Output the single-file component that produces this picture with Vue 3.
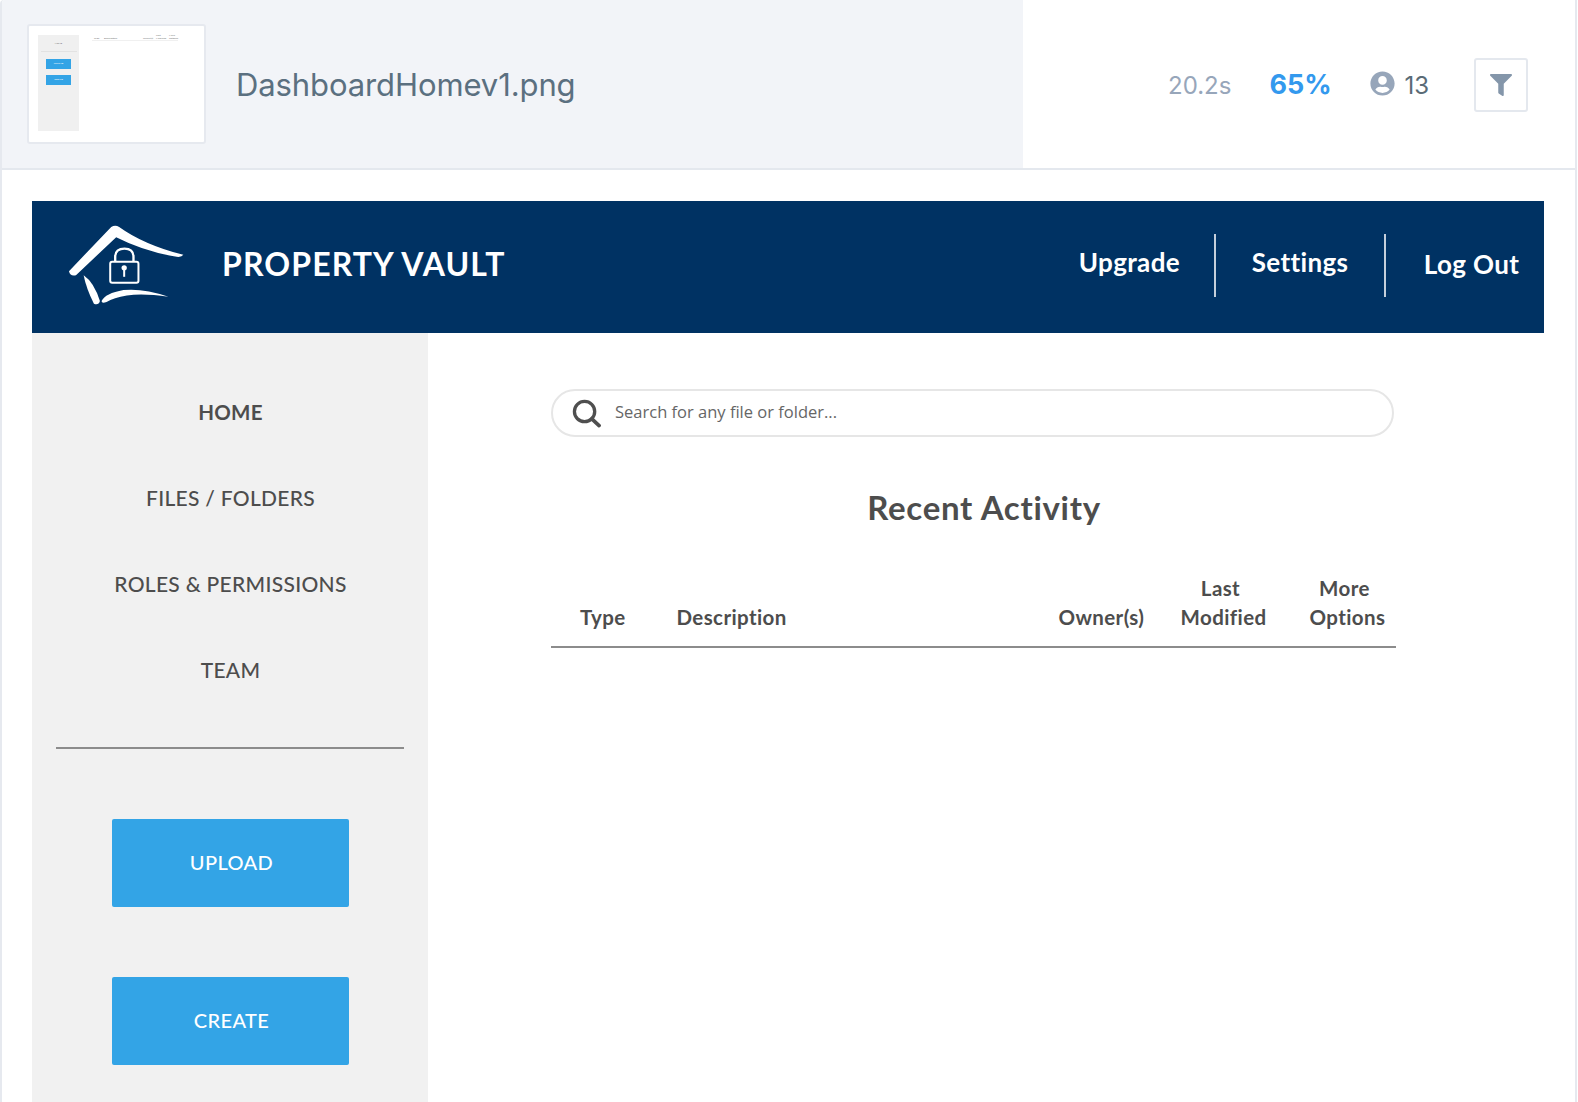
<script setup>
const navItems = [
  { label: 'HOME', active: true },
  { label: 'FILES / FOLDERS' },
  { label: 'ROLES & PERMISSIONS' },
  { label: 'TEAM' }
]
</script>

<template>
  <div class="frame">
    <header class="result">
      <div class="result-main">
        <div class="thumb">
          <div class="t-side">
            <span class="t-label">HOME</span>
            <i class="t-rule"></i>
            <span class="t-btn">UPLOAD</span>
            <span class="t-btn">CREATE</span>
          </div>
          <div class="t-table">
            <span>Type</span>
            <span>Description</span>
            <span>Owner(s)</span>
            <span>Last<br />Modified</span>
            <span>More<br />Options</span>
          </div>
        </div>
        <div class="filename">DashboardHomev1.png</div>
      </div>
      <div class="result-stats">
        <span class="time">20.2s</span>
        <span class="pct">65%</span>
        <span class="users">
          <svg class="user-icon" viewBox="0 0 496 512"><path fill="#97a6ba" d="M248 8C111 8 0 119 0 256s111 248 248 248 248-111 248-248S385 8 248 8zm0 96c48.6 0 88 39.4 88 88s-39.4 88-88 88-88-39.4-88-88 39.4-88 88-88zm0 344c-58.7 0-111.3-26.6-146.5-68.2 18.8-35.4 55.6-59.8 98.5-59.8 2.4 0 4.8.4 7.1 1.1 13 4.2 26.6 6.9 40.9 6.9 14.3 0 28-2.7 40.9-6.9 2.3-.7 4.7-1.1 7.1-1.1 42.9 0 79.7 24.4 98.5 59.8C359.3 421.4 306.7 448 248 448z"/></svg>
          13
        </span>
        <button class="filter">
          <svg viewBox="0 0 512 512"><path fill="#8496aa" d="M487.976 0H24.028C2.71 0-8.047 25.866 7.058 40.971L192 225.941V432c0 7.831 3.821 15.17 10.237 19.662l80 55.98C298.02 518.69 320 507.493 320 487.98V225.941l184.947-184.97C520.021 25.896 509.338 0 487.976 0z"/></svg>
        </button>
      </div>
    </header>

    <section class="shot">
      <div class="topbar">
        <svg class="logo" viewBox="110 90 355 245">
          <path fill="#fff" d="M116 228 L243 95 Q255 88 267 95 Q340 148 460 179 Q455 187 440 185 Q340 168 258 126 L137 240 Q120 245 116 228Z"/>
          <path fill="#fff" d="M160 240 Q192 262 209 318 Q205 332 191 326 Q168 280 160 240Z"/>
          <path fill="#fff" d="M214 318 Q225 295 280 285 Q340 279 415 305 Q340 294 290 301 Q250 308 229 321 Q214 327 214 318Z"/>
          <rect x="240" y="200" width="85" height="63" rx="6" fill="none" stroke="#fff" stroke-width="6"/>
          <path fill="none" stroke="#fff" stroke-width="7" d="M255 198 V185 Q255 160 283 160 Q310 160 310 185 V198"/>
          <circle cx="282" cy="218" r="8" fill="#fff"/>
          <rect x="279" y="218" width="6" height="27" fill="#fff"/>
        </svg>
        <div class="brand">PROPERTY VAULT</div>
        <nav class="topnav">
          <a class="tn-upgrade">Upgrade</a>
          <a class="tn-settings">Settings</a>
          <a class="tn-logout">Log Out</a>
        </nav>
      </div>

      <div class="body">
        <aside class="sidebar">
          <ul class="menu">
            <li v-for="item in navItems" :key="item.label" :class="{ active: item.active }">{{ item.label }}</li>
          </ul>
          <hr class="rule" />
          <button class="cta">UPLOAD</button>
          <button class="cta">CREATE</button>
        </aside>

        <main class="content">
          <div class="search">
            <svg class="search-icon" viewBox="0 0 30 30">
              <circle cx="13" cy="13" r="10.5" fill="none" stroke="#4f4f4f" stroke-width="3.4"/>
              <path d="M20.5 20.5 L28 27.5" fill="none" stroke="#4f4f4f" stroke-width="3.8" stroke-linecap="round"/>
            </svg>
            <span class="search-text">Search for any file or folder...</span>
          </div>
          <h1 class="title">Recent Activity</h1>
          <div class="thead">
            <div>Type</div>
            <div>Description</div>
            <div>Owner(s)</div>
            <div class="c-last">Last<br />Modified</div>
            <div class="c-more">More<br />Options</div>
          </div>
        </main>
      </div>
    </section>
  </div>
</template>

<style>
html, body { margin: 0; background: #fff; }
</style>

<style scoped>
.frame {
  box-sizing: border-box;
  width: 1577px;
  height: 1102px;
  overflow: hidden;
  border-left: 2px solid #e6e9ef;
  border-right: 2px solid #e6e9ef;
  border-top-left-radius: 4px;
  font-family: Inter, "Liberation Sans", sans-serif;
  background: #fff;
}
.result {
  display: flex;
  height: 168px;
  border-bottom: 2px solid #e4e8ee;
}
.result-main {
  width: 1021px;
  display: flex;
  align-items: center;
  background: #f2f4f8;
  padding-left: 25px;
  box-sizing: border-box;
}
.thumb {
  box-sizing: border-box;
  flex: none;
  width: 179px;
  height: 120px;
  background: #fff;
  border: 2px solid #e6e9ef;
  border-radius: 3px;
  display: flex;
  align-items: flex-start;
  padding: 9px 0 0 9px;
}
.t-side {
  width: 41px;
  height: 96px;
  background: #f0f0f0;
  display: flex;
  flex-direction: column;
  align-items: center;
  font-family: Lato, sans-serif;
}
.t-label { font-size: 2.4px; color: #666; margin-top: 7px; line-height: 3px; }
.t-rule { display: block; width: 36px; height: 1px; background: #e2e2e2; margin-top: 6px; }
.t-btn {
  display: block;
  width: 25px;
  height: 10px;
  line-height: 10px;
  text-align: center;
  font-size: 2.4px;
  color: #fff;
  background: #33a4e6;
  margin-top: 6px;
}
.t-rule + .t-btn { margin-top: 7px; }
.t-table {
  box-sizing: border-box;
  width: 86px;
  height: 7px;
  margin: -1px 0 0 13px;
  padding-left: 2px;
  border-bottom: 1px solid #f0f0f0;
  display: grid;
  grid-template-columns: 10px 39px 13px 13px 1fr;
  align-items: end;
  font-family: Lato, sans-serif;
  font-size: 2.6px;
  line-height: 3px;
  color: #777;
}
.filename {
  margin-left: 30px;
  font-size: 31px;
  letter-spacing: -0.1px;
  color: #5b7080;
  white-space: nowrap;
}
.result-stats {
  flex: 1;
  display: flex;
  align-items: center;
  padding-left: 145px;
}
.time { font-size: 24px; color: #97a6ba; padding-top: 2px; }
.pct { font-size: 27px; font-weight: 700; color: #3399ee; margin-left: 38px; }
.users {
  display: flex;
  align-items: center;
  font-size: 24px;
  color: #5a6b76;
  margin-left: 38px;
  padding-top: 2px;
}
.user-icon { width: 25px; height: 25px; margin-right: 10px; margin-top: -3px; }
.filter {
  box-sizing: border-box;
  width: 54px;
  height: 54px;
  margin: 1px 0 0 45px;
  padding: 0;
  background: #fff;
  border: 2px solid #e4e8ee;
  border-radius: 3px;
  display: flex;
  align-items: center;
  justify-content: center;
}
.filter svg { width: 22px; height: 22px; }
.shot {
  margin: 31px 31px 0 30px;
  font-family: Lato, "Open Sans", sans-serif;
}
.topbar {
  display: flex;
  align-items: center;
  height: 132px;
  background: #003263;
  color: #fff;
}
.logo { width: 118px; height: 82px; margin: 0 0 3px 35px; flex: none; }
.brand {
  margin: 0 0 7px 37px;
  font-size: 32px;
  font-weight: 700;
  letter-spacing: 1.1px;
  white-space: nowrap;
}
.topnav {
  margin: 0 0 4px auto;
  display: flex;
  align-items: stretch;
  height: 63px;
  font-size: 26px;
  font-weight: 700;
  letter-spacing: 0.35px;
}
.topnav a {
  box-sizing: border-box;
  display: flex;
  align-items: center;
  justify-content: center;
  white-space: nowrap;
}
.tn-upgrade {
  width: 140px;
  justify-content: flex-end !important;
  border-right: 2px solid #c4cfdb;
  padding: 0 34px 6px 0;
}
.tn-settings { width: 170px; border-right: 2px solid #c4cfdb; padding-bottom: 6px; }
.tn-logout { width: 158px; padding: 0 0 2px 13px; }
.body { display: flex; align-items: stretch; height: 800px; }
.sidebar {
  box-sizing: border-box;
  flex: none;
  width: 396px;
  background: #f1f1f1;
  padding: 0 24px;
  display: flex;
  flex-direction: column;
  align-items: center;
}
.menu {
  list-style: none;
  margin: 0;
  padding: 35.5px 0 0 1px;
  box-sizing: border-box;
  width: 100%;
  text-align: center;
  font-size: 21px;
  font-weight: 500;
  letter-spacing: 0.3px;
  color: #4d4d4d;
}
.menu li { height: 86px; line-height: 86px; margin: 0; white-space: nowrap; }
.menu li.active { font-weight: 700; font-size: 20.5px; }
.rule {
  width: 100%;
  height: 2px;
  margin: 34.5px 0 0;
  border: 0;
  background: #8c8c8c;
}
.cta {
  width: 237px;
  height: 88px;
  flex: none;
  margin-top: 70px;
  padding: 0 0 2px 3px;
  background: #33a4e6;
  color: #fff;
  border: 0;
  border-radius: 2px;
  font-family: inherit;
  font-size: 20px;
  font-weight: 500;
  letter-spacing: 0.4px;
}
.content {
  flex: 1;
  padding: 56px 0 0 123px;
}
.search {
  box-sizing: border-box;
  width: 843px;
  height: 48px;
  border: 2px solid #e6e6e6;
  border-radius: 24px;
  display: flex;
  align-items: center;
  padding-left: 19px;
  color: #666;
  font-family: "Open Sans", sans-serif;
  font-size: 16.5px;
}
.search-icon { width: 29px; height: 29px; margin-right: 14px; flex: none; }
.search-text { padding-bottom: 4px; }
.title {
  width: 866px;
  margin: 50px 0 0;
  text-align: center;
  font-size: 33px;
  line-height: 40px;
  font-weight: 700;
  letter-spacing: 0.7px;
  color: #4d4d4d;
}
.thead {
  box-sizing: border-box;
  width: 845px;
  height: 82px;
  margin-top: 39px;
  padding: 0 0 15px 29px;
  border-bottom: 2px solid #8c8c8c;
  display: grid;
  grid-template-columns: 96.5px 382px 122px 129px 1fr;
  align-items: end;
  font-size: 20.5px;
  line-height: 28.5px;
  font-weight: 700;
  letter-spacing: 0.4px;
  color: #4d4d4d;
}
.c-last, .c-more {
  justify-self: start;
  text-align: center;
  text-indent: -6px;
}
</style>
